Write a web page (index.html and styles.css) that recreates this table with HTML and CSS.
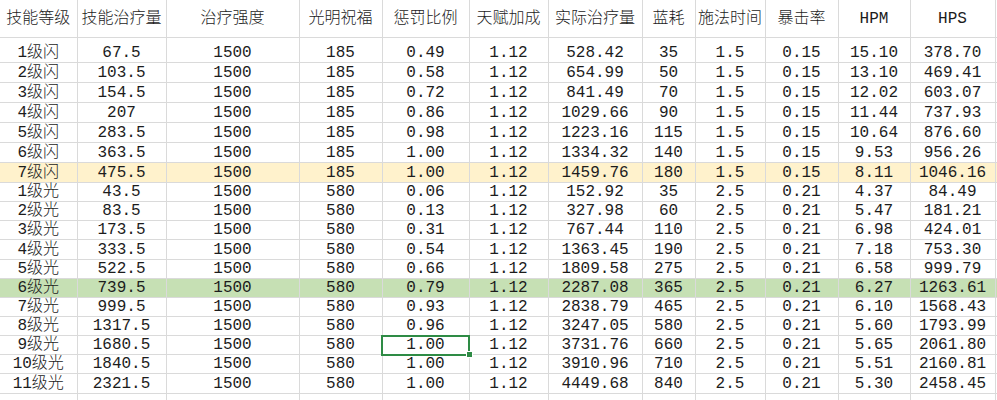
FILE: index.html
```html
<!DOCTYPE html>
<html lang="zh">
<head>
<meta charset="utf-8">
<link rel="stylesheet" href="styles.css">
</head>
<body>
<table class="sheet">
<colgroup>
<col class="c1"><col class="c2"><col class="c3"><col class="c4"><col class="c5"><col class="c6"><col class="c7"><col class="c8"><col class="c9"><col class="c10"><col class="c11"><col class="c12"><col class="c13">
</colgroup>
<thead>
<tr class="head"><th>技能等级</th><th>技能治疗量</th><th>治疗强度</th><th>光明祝福</th><th>惩罚比例</th><th>天赋加成</th><th>实际治疗量</th><th>蓝耗</th><th>施法时间</th><th>暴击率</th><th>HPM</th><th>HPS</th><th></th></tr>
</thead>
<tbody>
<tr class="first"><td>1级闪</td><td>67.5</td><td>1500</td><td>185</td><td>0.49</td><td>1.12</td><td>528.42</td><td>35</td><td>1.5</td><td>0.15</td><td>15.10</td><td>378.70</td><td></td></tr>
<tr class="flash"><td>2级闪</td><td>103.5</td><td>1500</td><td>185</td><td>0.58</td><td>1.12</td><td>654.99</td><td>50</td><td>1.5</td><td>0.15</td><td>13.10</td><td>469.41</td><td></td></tr>
<tr class="flash"><td>3级闪</td><td>154.5</td><td>1500</td><td>185</td><td>0.72</td><td>1.12</td><td>841.49</td><td>70</td><td>1.5</td><td>0.15</td><td>12.02</td><td>603.07</td><td></td></tr>
<tr class="flash"><td>4级闪</td><td>207</td><td>1500</td><td>185</td><td>0.86</td><td>1.12</td><td>1029.66</td><td>90</td><td>1.5</td><td>0.15</td><td>11.44</td><td>737.93</td><td></td></tr>
<tr class="flash"><td>5级闪</td><td>283.5</td><td>1500</td><td>185</td><td>0.98</td><td>1.12</td><td>1223.16</td><td>115</td><td>1.5</td><td>0.15</td><td>10.64</td><td>876.60</td><td></td></tr>
<tr class="flash"><td>6级闪</td><td>363.5</td><td>1500</td><td>185</td><td>1.00</td><td>1.12</td><td>1334.32</td><td>140</td><td>1.5</td><td>0.15</td><td>9.53</td><td>956.26</td><td></td></tr>
<tr class="flash hl-yellow"><td>7级闪</td><td>475.5</td><td>1500</td><td>185</td><td>1.00</td><td>1.12</td><td>1459.76</td><td>180</td><td>1.5</td><td>0.15</td><td>8.11</td><td>1046.16</td><td></td></tr>
<tr class="light"><td>1级光</td><td>43.5</td><td>1500</td><td>580</td><td>0.06</td><td>1.12</td><td>152.92</td><td>35</td><td>2.5</td><td>0.21</td><td>4.37</td><td>84.49</td><td></td></tr>
<tr class="light"><td>2级光</td><td>83.5</td><td>1500</td><td>580</td><td>0.13</td><td>1.12</td><td>327.98</td><td>60</td><td>2.5</td><td>0.21</td><td>5.47</td><td>181.21</td><td></td></tr>
<tr class="light"><td>3级光</td><td>173.5</td><td>1500</td><td>580</td><td>0.31</td><td>1.12</td><td>767.44</td><td>110</td><td>2.5</td><td>0.21</td><td>6.98</td><td>424.01</td><td></td></tr>
<tr class="light"><td>4级光</td><td>333.5</td><td>1500</td><td>580</td><td>0.54</td><td>1.12</td><td>1363.45</td><td>190</td><td>2.5</td><td>0.21</td><td>7.18</td><td>753.30</td><td></td></tr>
<tr class="light"><td>5级光</td><td>522.5</td><td>1500</td><td>580</td><td>0.66</td><td>1.12</td><td>1809.58</td><td>275</td><td>2.5</td><td>0.21</td><td>6.58</td><td>999.79</td><td></td></tr>
<tr class="light hl-green"><td>6级光</td><td>739.5</td><td>1500</td><td>580</td><td>0.79</td><td>1.12</td><td>2287.08</td><td>365</td><td>2.5</td><td>0.21</td><td>6.27</td><td>1263.61</td><td></td></tr>
<tr class="light"><td>7级光</td><td>999.5</td><td>1500</td><td>580</td><td>0.93</td><td>1.12</td><td>2838.79</td><td>465</td><td>2.5</td><td>0.21</td><td>6.10</td><td>1568.43</td><td></td></tr>
<tr class="light"><td>8级光</td><td>1317.5</td><td>1500</td><td>580</td><td>0.96</td><td>1.12</td><td>3247.05</td><td>580</td><td>2.5</td><td>0.21</td><td>5.60</td><td>1793.99</td><td></td></tr>
<tr class="light"><td>9级光</td><td>1680.5</td><td>1500</td><td>580</td><td class="selected">1.00</td><td>1.12</td><td>3731.76</td><td>660</td><td>2.5</td><td>0.21</td><td>5.65</td><td>2061.80</td><td></td></tr>
<tr class="light"><td>10级光</td><td>1840.5</td><td>1500</td><td>580</td><td>1.00</td><td>1.12</td><td>3910.96</td><td>710</td><td>2.5</td><td>0.21</td><td>5.51</td><td>2160.81</td><td></td></tr>
<tr class="light"><td>11级光</td><td>2321.5</td><td>1500</td><td>580</td><td>1.00</td><td>1.12</td><td>4449.68</td><td>840</td><td>2.5</td><td>0.21</td><td>5.30</td><td>2458.45</td><td></td></tr>
<tr class="tail"><td></td><td></td><td></td><td></td><td></td><td></td><td></td><td></td><td></td><td></td><td></td><td></td><td></td></tr>
</tbody>
</table>
</body>
</html>
```
FILE: styles.css
```css
html, body {
  margin: 0;
  padding: 0;
  background: #ffffff;
  overflow: hidden;
}

.sheet {
  border-collapse: collapse;
  table-layout: fixed;
  width: 1000px;
  font-family: "Liberation Mono", "Noto Sans CJK SC", monospace;
  font-size: 16px;
  font-weight: 300;
  color: #1c1c1c;
}

.c1 { width: 77px; }
.c2 { width: 89px; }
.c3 { width: 133px; }
.c4 { width: 83px; }
.c5 { width: 87px; }
.c6 { width: 79px; }
.c7 { width: 94px; }
.c8 { width: 53px; }
.c9 { width: 70px; }
.c10 { width: 73px; }
.c11 { width: 72px; }
.c12 { width: 85px; }
.c13 { width: 5px; }

.sheet th,
.sheet td {
  border: 1px solid #dadada;
  padding: 0;
  text-align: center;
  white-space: nowrap;
  overflow: visible;
}

.sheet th {
  font-weight: 300;
  height: 37px;
  vertical-align: middle;
  line-height: 20px;
  border-top: none;
}

.sheet td {
  vertical-align: bottom;
  line-height: 18px;
}

.sheet th:first-child,
.sheet td:first-child {
  border-left: none;
}

.first td { height: 24px; }
.flash td { height: 19px; }
.light td { height: 18.15px; }
.tail td { height: 10px; }

.hl-yellow td { background: #fff2cc; }
.hl-green td { background: #c6e0b4; }

.sheet td.selected {
  position: relative;
  outline: 2px solid #2e8b45;
  outline-offset: -1px;
}

.sheet td.selected::after {
  content: "";
  position: absolute;
  right: -4px;
  bottom: -4px;
  width: 5px;
  height: 5px;
  background: #2e8b45;
  border: 1px solid #ffffff;
}
```
